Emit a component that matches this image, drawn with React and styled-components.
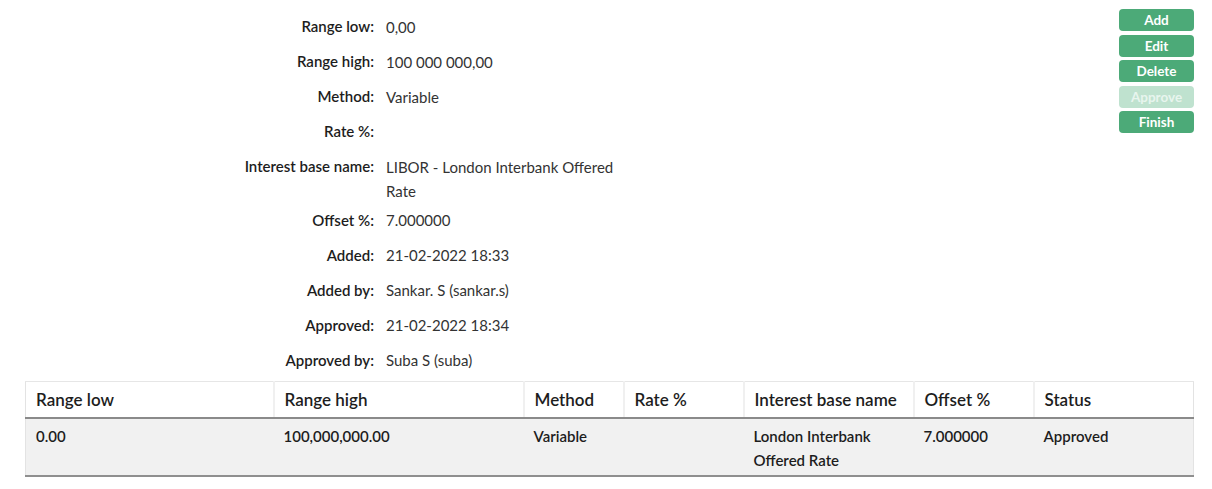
import React from "react";
import styled, { createGlobalStyle } from "styled-components";

const details = [
  { label: "Range low:", value: "0,00" },
  { label: "Range high:", value: "100 000 000,00" },
  { label: "Method:", value: "Variable" },
  { label: "Rate %:", value: "" },
  { label: "Interest base name:", value: "LIBOR - London Interbank Offered Rate" },
  { label: "Offset %:", value: "7.000000" },
  { label: "Added:", value: "21-02-2022 18:33" },
  { label: "Added by:", value: "Sankar. S (sankar.s)" },
  { label: "Approved:", value: "21-02-2022 18:34" },
  { label: "Approved by:", value: "Suba S (suba)" },
];

const columns = [
  { title: "Range low", width: 248 },
  { title: "Range high", width: 250 },
  { title: "Method", width: 100 },
  { title: "Rate %", width: 120 },
  { title: "Interest base name", width: 170 },
  { title: "Offset %", width: 120 },
  { title: "Status" },
];

const rows = [
  [
    "0.00",
    "100,000,000.00",
    "Variable",
    "",
    "London Interbank Offered Rate",
    "7.000000",
    "Approved",
  ],
];

const actions = [
  { label: "Add" },
  { label: "Edit" },
  { label: "Delete" },
  { label: "Approve", disabled: true },
  { label: "Finish" },
];

const App = () => {
  return (
    <>
      <GlobalStyle />
      <Page>
        <Top>
          <DetailList>
            {details.map((d) => (
              <DetailRow key={d.label}>
                <DetailLabel>{d.label}</DetailLabel>
                <DetailValue>{d.value}</DetailValue>
              </DetailRow>
            ))}
          </DetailList>
          <ActionBar>
            {actions.map((a) => (
              <ActionButton key={a.label} disabled={a.disabled}>
                {a.label}
              </ActionButton>
            ))}
          </ActionBar>
        </Top>
        <Table>
          <colgroup>
            {columns.map((c) => (
              <col key={c.title} style={c.width ? { width: c.width } : undefined} />
            ))}
          </colgroup>
          <thead>
            <tr>
              {columns.map((c) => (
                <HeadCell key={c.title}>{c.title}</HeadCell>
              ))}
            </tr>
          </thead>
          <tbody>
            {rows.map((r, i) => (
              <BodyRow key={i}>
                {r.map((cell, j) => (
                  <BodyCell key={j}>{cell}</BodyCell>
                ))}
              </BodyRow>
            ))}
          </tbody>
        </Table>
      </Page>
    </>
  );
};

const GlobalStyle = createGlobalStyle`
  body {
    margin: 0;
    background: #fff;
    font-family: Lato, "Open Sans", sans-serif;
    color: #222;
  }
`;

const Page = styled.div`
  padding: 9px 18px 0 25px;
`;

const Top = styled.div`
  display: flex;
  justify-content: space-between;
  align-items: flex-start;
`;

const DetailList = styled.div`
  display: flex;
  flex-direction: column;
`;

const DetailRow = styled.div`
  display: grid;
  grid-template-columns: 349px 242px;
  column-gap: 12px;
  align-items: start;
`;

const DetailLabel = styled.div`
  text-align: right;
  font-size: 15px;
  font-weight: 600;
  line-height: 23px;
  padding: 6px 0;
  color: #1d1d1d;
`;

const DetailValue = styled.div`
  font-size: 15px;
  line-height: 24px;
  padding-top: 5.5px;
  color: #333;
`;

const ActionBar = styled.div`
  display: flex;
  flex-direction: column;
  gap: 3.5px;
  width: 75px;
`;

const ActionButton = styled.button`
  height: 22px;
  border: none;
  border-radius: 4px;
  background: ${(p) => (p.disabled ? "#bfe2cf" : "#4caa78")};
  color: ${(p) => (p.disabled ? "#e8f5ee" : "#fff")};
  font-family: Lato, sans-serif;
  font-weight: 700;
  font-size: 13.5px;
  padding: 0;
  cursor: pointer;
`;

const Table = styled.table`
  margin-top: 3px;
  width: 1169px;
  border-collapse: collapse;
  table-layout: fixed;
  border-left: 1px solid #e3e3e3;
  border-right: 1px solid #e3e3e3;
`;

const HeadCell = styled.th`
  text-align: left;
  font-size: 17px;
  font-weight: 600;
  padding: 0 10px;
  height: 35px;
  border-top: 1px solid #e6e6e6;
  border-bottom: 2px solid #8a8a8a;
  border-left: 2px solid #f0f0f0;
  color: #1d1d1d;

  &:first-child {
    border-left: none;
  }
`;

const BodyRow = styled.tr`
  background: #f1f1f1;
  border-bottom: 2px solid #8f8f8f;
`;

const BodyCell = styled.td`
  vertical-align: top;
  font-size: 15px;
  font-weight: 600;
  line-height: 24px;
  padding: 5px 10px 3px 10px;
  height: 46px;
  color: #1d1d1d;
`;

export default App;
